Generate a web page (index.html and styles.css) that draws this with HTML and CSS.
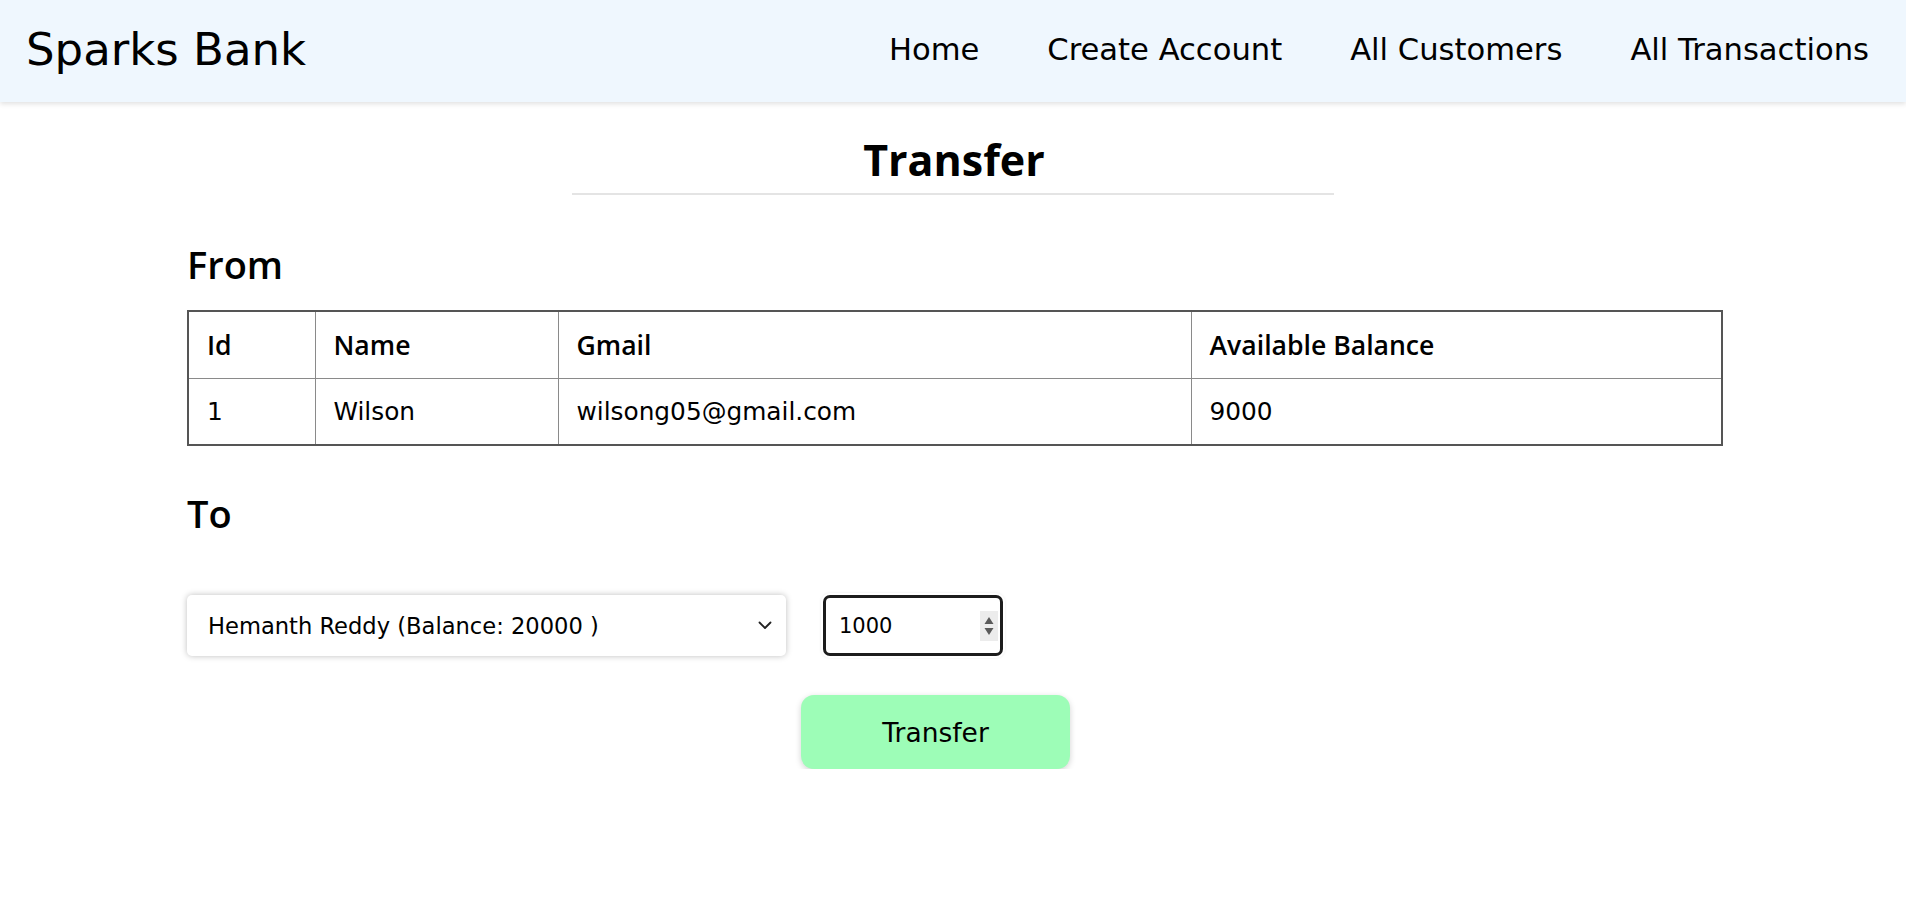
FILE: index.html
```html
<!DOCTYPE html>
<html lang="en">
<head>
<meta charset="utf-8">
<title>Sparks Bank - Transfer</title>
<link rel="stylesheet" href="styles.css">
</head>
<body>
<header class="navbar">
  <div class="brand">Sparks Bank</div>
  <nav class="nav">
    <a href="#">Home</a>
    <a href="#">Create Account</a>
    <a href="#">All Customers</a>
    <a href="#">All Transactions</a>
  </nav>
</header>

<section class="title-block">
  <h1 class="page-title">Transfer</h1>
  <hr class="title-rule">
</section>

<main class="content">
  <h2 class="section-title from-title">From</h2>
  <table class="from-table">
    <colgroup>
      <col class="c-id"><col class="c-name"><col class="c-mail"><col class="c-bal">
    </colgroup>
    <thead>
      <tr><th>Id</th><th>Name</th><th>Gmail</th><th>Available Balance</th></tr>
    </thead>
    <tbody>
      <tr><td>1</td><td>Wilson</td><td>wilsong05@gmail.com</td><td>9000</td></tr>
    </tbody>
  </table>

  <h2 class="section-title to-title">To</h2>
  <form class="transfer-form">
    <div class="form-row">
      <div class="select-wrap">
        <select class="to-select">
          <option>Hemanth Reddy (Balance: 20000 )</option>
        </select>
        <svg class="chevron" width="14" height="9" viewBox="0 0 14 9"><path d="M1.5 1.5 L7 7 L12.5 1.5" fill="none" stroke="#222" stroke-width="1.8" stroke-linecap="round" stroke-linejoin="round"/></svg>
      </div>
      <div class="amount-wrap">
        <input class="amount" type="number" value="1000">
        <span class="spinner">
          <svg width="18" height="30" viewBox="0 0 18 30"><rect width="18" height="30" fill="#ececec"/><path d="M4.5 13 L9 6 L13.5 13 Z" fill="#5a5a5a"/><path d="M4.5 17 L9 24 L13.5 17 Z" fill="#5a5a5a"/></svg>
        </span>
      </div>
    </div>
    <button type="button" class="transfer-btn">Transfer</button>
  </form>
</main>
</body>
</html>
```

FILE: styles.css
```css
* { box-sizing: border-box; }

body {
  margin: 0;
  font-family: "DejaVu Sans", "Open Sans", sans-serif;
  color: #000;
  background: #fff;
}

.navbar {
  height: 102px;
  display: flex;
  align-items: center;
  justify-content: space-between;
  padding: 0 37px 0 26px;
  background: #eff7fe;
  box-shadow: 0 2px 5px rgba(0, 0, 0, 0.12);
}

.brand {
  font-size: 45px;
  line-height: 52px;
  position: relative;
  top: -1px;
}

.nav {
  display: flex;
  gap: 68px;
  position: relative;
  top: -1px;
}

.nav a {
  font-size: 30.6px;
  line-height: 34px;
  color: #000;
  text-decoration: none;
}

.title-block {
  padding-top: 28px;
}

.page-title {
  margin: 0;
  text-align: center;
  font-family: "Open Sans", sans-serif;
  font-weight: 700;
  font-size: 43px;
  line-height: 60px;
  position: relative;
  left: 1px;
}

.title-rule {
  width: 40%;
  margin: 3px auto 0;
  border: none;
  height: 2px;
  background: #e4e4e4;
}

.content {
  padding: 0 183px 0 187px;
}

.section-title {
  margin: 0;
  font-family: "Open Sans", sans-serif;
  font-weight: 600;
  font-size: 38px;
  line-height: 44px;
}

.from-title { margin-top: 47px; }

.from-table {
  margin-top: 24px;
  width: 1534px;
  table-layout: fixed;
  border-collapse: collapse;
  border: 2px solid #555;
}

.c-id { width: 127px; }
.c-name { width: 243px; }
.c-mail { width: 633px; }
.c-bal { width: 531px; }

.from-table th,
.from-table td {
  border: 1px solid #8a8a8a;
  text-align: left;
  padding: 0 18px;
  vertical-align: middle;
}

.from-table th {
  height: 67px;
  font-family: "Open Sans", sans-serif;
  font-weight: 600;
  font-size: 26.6px;
}

.from-table td {
  height: 67px;
  font-size: 24.8px;
}

.to-title { margin-top: 45px; }

.transfer-form {
  margin-top: 60px;
}

.form-row {
  display: flex;
  align-items: center;
  gap: 37px;
}

.select-wrap {
  position: relative;
  width: 599px;
  height: 61px;
}

.to-select {
  width: 599px;
  height: 61px;
  padding: 0 40px 0 21px;
  border: none;
  border-radius: 5px;
  background: #fff;
  font-family: "DejaVu Sans", sans-serif;
  font-size: 22.6px;
  color: #000;
  appearance: none;
  -webkit-appearance: none;
  box-shadow: 0 0 6px rgba(0, 0, 0, 0.26);
}

.chevron {
  position: absolute;
  right: 14px;
  top: 26px;
  pointer-events: none;
}

.amount-wrap {
  position: relative;
  width: 180px;
  height: 61px;
}

.amount {
  width: 180px;
  height: 61px;
  border: 3px solid #1c1c1c;
  border-radius: 7px;
  padding: 0 10px 0 13px;
  font-family: "DejaVu Sans", sans-serif;
  font-size: 21px;
  color: #000;
  appearance: textfield;
  -moz-appearance: textfield;
  outline: none;
  box-shadow: 0 0 0 2px #fff, 0 0 3px 2px rgba(0, 0, 0, 0.08);
}

.amount::-webkit-inner-spin-button,
.amount::-webkit-outer-spin-button {
  -webkit-appearance: none;
  margin: 0;
}

.spinner {
  position: absolute;
  right: 5px;
  top: 16px;
  width: 18px;
  height: 30px;
  display: block;
}

.spinner svg { display: block; }

.transfer-btn {
  display: block;
  margin: 39px 0 0 614px;
  width: 269px;
  height: 74px;
  border: none;
  border-radius: 13px;
  background: #9dfdb7;
  box-shadow: 0 2px 6px rgba(0, 0, 0, 0.18);
  font-family: "DejaVu Sans", sans-serif;
  font-size: 26.5px;
  color: #000;
  cursor: pointer;
}
```
